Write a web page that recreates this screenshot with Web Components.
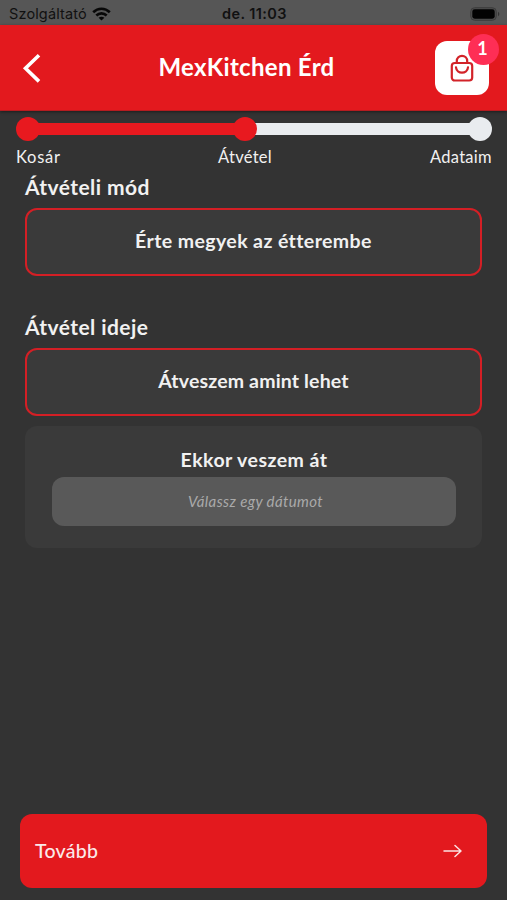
<!DOCTYPE html>
<html lang="hu">
<head>
<meta charset="utf-8">
<title>MexKitchen Érd</title>
<style>
  body{ margin:0; background:#333; font-family:Lato, "Open Sans", sans-serif; color:#f1f1f1; }
</style>
</head>
<body>
<checkout-page></checkout-page>

<script>
function define(name, html) {
  const template = document.createElement("template");
  template.innerHTML = html;
  customElements.define(name, class extends HTMLElement {
    constructor() {
      super();
      this.attachShadow({ mode: "open" });
      this.shadowRoot.appendChild(template.content.cloneNode(true));
    }
  });
}

define("status-bar", `
  <style>
    :host{
      display:grid; grid-template-columns:1fr auto 1fr; align-items:center;
      height:25px; box-sizing:border-box; padding:2px 7px 0 9px;
      background:#565656; color:#111; font:14.5px Inter, sans-serif;
    }
    .left{ display:flex; align-items:center; gap:5px; }
    .time{ font-weight:600; letter-spacing:0.4px; }
    .carrier{ letter-spacing:0.14px; }
    .battery{ justify-self:end; }
    svg{ display:block; }
  </style>
  <div class="left">
    <span class="carrier">Szolgáltató</span>
    <svg width="19" height="14" viewBox="0 0 19 14" fill="none" stroke="#080808" stroke-width="2.6">
      <path d="M1.2 5.2C6 .5 13 .5 17.8 5.2M4.3 8.5c3-2.9 7.4-2.9 10.4 0"/>
      <path d="M9.5 13.5 6.6 10.7c1.7-1.4 4.1-1.4 5.8 0z" fill="#080808" stroke="none"/>
    </svg>
  </div>
  <span class="time">de. 11:03</span>
  <svg class="battery" width="30" height="14" viewBox="0 0 30 14">
    <rect x=".7" y=".7" width="25.6" height="12.6" rx="4" fill="#4d4d4d" stroke="#3d3d3d"/>
    <rect x="2.3" y="2.3" width="22.4" height="9.4" rx="2.4" fill="#020202"/>
    <path d="M28 4.8c1.8.8 1.8 3.6 0 4.4z" fill="#333"/>
  </svg>
`);

define("cart-button", `
  <style>
    :host{
      display:grid; place-items:center; position:relative;
      width:54px; height:54px; border-radius:12px; background:#fff;
    }
    .badge{
      position:absolute; top:-7px; right:-10px;
      width:31px; height:31px; border-radius:50%;
      display:grid; place-items:center;
      background:#fe2e55; color:#fff; font-size:18px; font-weight:700;
    }
    .badge slot{ display:block; margin:-2px 2px 0 0; }
    svg{ display:block; }
  </style>
  <svg width="24" height="28" viewBox="0 0 24 28" fill="none" stroke="#d22329" stroke-width="2.2" stroke-linecap="round">
    <rect x="1.8" y="9" width="20.4" height="17.5" rx="3"/>
    <path d="M6.8 8.8V7a5.2 5.2 0 0 1 10.4 0v1.8M6 13.4c.6 7 11.4 7 12 0"/>
  </svg>
  <span class="badge"><slot></slot></span>
`);

define("app-header", `
  <style>
    :host{
      display:grid; grid-template-columns:54px 1fr 54px; align-items:center;
      height:86px; box-sizing:border-box; padding:0 18px 0 22px;
      background:#e3191e; border-bottom:1px solid #b51c20;
      box-shadow:0 1px 3px rgba(0,0,0,0.45);
    }
    h1{
      margin:0 18px 2px 0; text-align:center; color:#fff;
      font-size:24px; line-height:30px; font-weight:700; letter-spacing:0.3px;
    }
    svg{ display:block; }
  </style>
  <svg width="20" height="30" viewBox="0 0 20 30" fill="none" stroke="#fff" stroke-width="3.6">
    <path d="M17 2.2 3.5 15.3 17 28.4"/>
  </svg>
  <h1><slot></slot></h1>
  <cart-button>1</cart-button>
`);

define("progress-steps", `
  <style>
    :host{ display:block; padding:6px 15px 0 16px; }
    .track{ display:flex; align-items:center; height:24px; isolation:isolate; }
    .dot{ position:relative; z-index:1; width:24px; height:24px; border-radius:50%; background:#e8191f; flex:none; }
    .bar{ height:12px; background:#e8191f; margin:0 -4px; min-width:0; }
    .done{ flex:193.5; }
    .todo{ flex:211; background:#e9ecef; }
    .last{ background:#e9ecef; }
    .labels{
      display:grid; grid-template-columns:1fr auto 1fr; margin-top:6px;
      font-size:16.5px; line-height:20px;
    }
    .labels span:nth-child(1){ letter-spacing:0.75px; }
    .labels span:nth-child(2){ margin-right:18px; letter-spacing:0.25px; }
    .labels span:nth-child(3){ text-align:right; letter-spacing:0.3px; }
  </style>
  <div class="track">
    <i class="dot"></i><i class="bar done"></i><i class="dot"></i>
    <i class="bar todo"></i><i class="dot last"></i>
  </div>
  <div class="labels"><span>Kosár</span><span>Átvétel</span><span>Adataim</span></div>
`);

define("form-section", `
  <style>
    :host{ display:block; }
    h2{ margin:0 0 7px; font-size:21px; line-height:28px; font-weight:700; letter-spacing:0.42px; }
  </style>
  <h2><slot name="title"></slot></h2>
  <slot></slot>
`);

define("option-button", `
  <style>
    :host{
      display:flex; align-items:center; justify-content:center;
      height:68px; box-sizing:border-box; padding-bottom:3px;
      border:2px solid #d41f25; border-radius:12px; background:#3a3a3a;
      font-size:19.5px; font-weight:700; letter-spacing:var(--tracking, 0.16px);
    }
  </style>
  <slot></slot>
`);

define("date-card", `
  <style>
    :host{
      display:block; height:122px; box-sizing:border-box; margin-top:10px;
      padding:20px 26px 0 27px; border-radius:12px; background:#3a3a3a;
    }
    h3{
      margin:0 0 3px; text-align:center;
      font-size:19.5px; line-height:28px; font-weight:700; letter-spacing:0.45px;
    }
    .input{
      display:flex; align-items:center; justify-content:center;
      height:49px; box-sizing:border-box; padding:0 0 1px 3px; border-radius:12px; background:#595959;
      color:#aaa; font-size:15px; font-style:italic; letter-spacing:0.4px;
    }
  </style>
  <h3><slot name="title"></slot></h3>
  <div class="input"><slot></slot></div>
`);

define("next-button", `
  <style>
    :host{
      display:flex; align-items:center; justify-content:space-between;
      height:74px; box-sizing:border-box; padding:0 25px 0 15px;
      border-radius:12px; background:#e3191e; color:#fbe9e9;
      font-size:19.5px; font-weight:500; letter-spacing:0.3px;
    }
    .label{ margin-top:-2px; }
    svg{ display:block; }
  </style>
  <span class="label"><slot></slot></span>
  <svg width="19" height="14" viewBox="0 0 19 14" fill="none" stroke="#fbe3e3" stroke-width="1.5" stroke-linecap="round" stroke-linejoin="round">
    <path d="M1 7h17M12 1.5 18 7l-6 5.5"/>
  </svg>
`);

define("checkout-page", `
  <style>
    :host{ display:flex; flex-direction:column; height:900px; box-sizing:border-box; background:#333; }
    main{ flex:1; padding:6px 25px 0; }
    .time{ margin-top:37px; }
    .pickup{ --tracking:0.4px; }
    footer{ padding:0 20px 12px; }
  </style>
  <status-bar></status-bar>
  <app-header>MexKitchen Érd</app-header>
  <progress-steps></progress-steps>
  <main>
    <form-section class="pickup">
      <span slot="title">Átvételi mód</span>
      <option-button>Érte megyek az étterembe</option-button>
    </form-section>
    <form-section class="time">
      <span slot="title">Átvétel ideje</span>
      <option-button>Átveszem amint lehet</option-button>
      <date-card><span slot="title">Ekkor veszem át</span>Válassz egy dátumot</date-card>
    </form-section>
  </main>
  <footer><next-button>Tovább</next-button></footer>
`);
</script>
</body>
</html>
